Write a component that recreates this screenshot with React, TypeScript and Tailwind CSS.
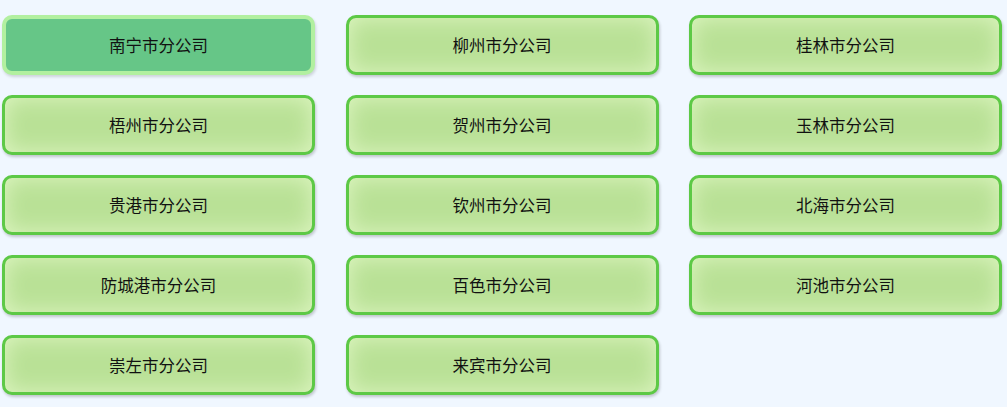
import React from "react";

const names = [
  "南宁市分公司",
  "柳州市分公司",
  "桂林市分公司",
  "梧州市分公司",
  "贺州市分公司",
  "玉林市分公司",
  "贵港市分公司",
  "钦州市分公司",
  "北海市分公司",
  "防城港市分公司",
  "百色市分公司",
  "河池市分公司",
  "崇左市分公司",
  "来宾市分公司",
];

export default function App() {
  return (
    <div
      className="w-[1007px] h-[407px] bg-[#f0f7ff] pt-[15px] pl-[2px]"
      style={{ fontFamily: '"Noto Sans CJK SC", "Noto Sans", sans-serif' }}
    >
      <div className="grid grid-cols-[313px_313px_313px] gap-x-[30.5px] gap-y-[20px]">
        {names.map((n, i) =>
          i === 0 ? (
            <div
              key={n}
              className="h-[60px] rounded-[10px] border-[4px] border-[#b2f0a0] bg-[#66c687] flex items-center justify-center text-[16.5px] leading-none text-[#111] shadow-[1px_2px_3px_rgba(0,0,0,0.15)]"
            >
              {n}
            </div>
          ) : (
            <div
              key={n}
              className="h-[60px] rounded-[10px] border-[3.5px] border-[#5dc946] bg-[#b9e196] flex items-center justify-center text-[16.5px] leading-none text-[#111] shadow-[inset_0_0_22px_#def6c2,1px_2px_3px_rgba(0,0,0,0.2)]"
            >
              {n}
            </div>
          )
        )}
      </div>
    </div>
  );
}
